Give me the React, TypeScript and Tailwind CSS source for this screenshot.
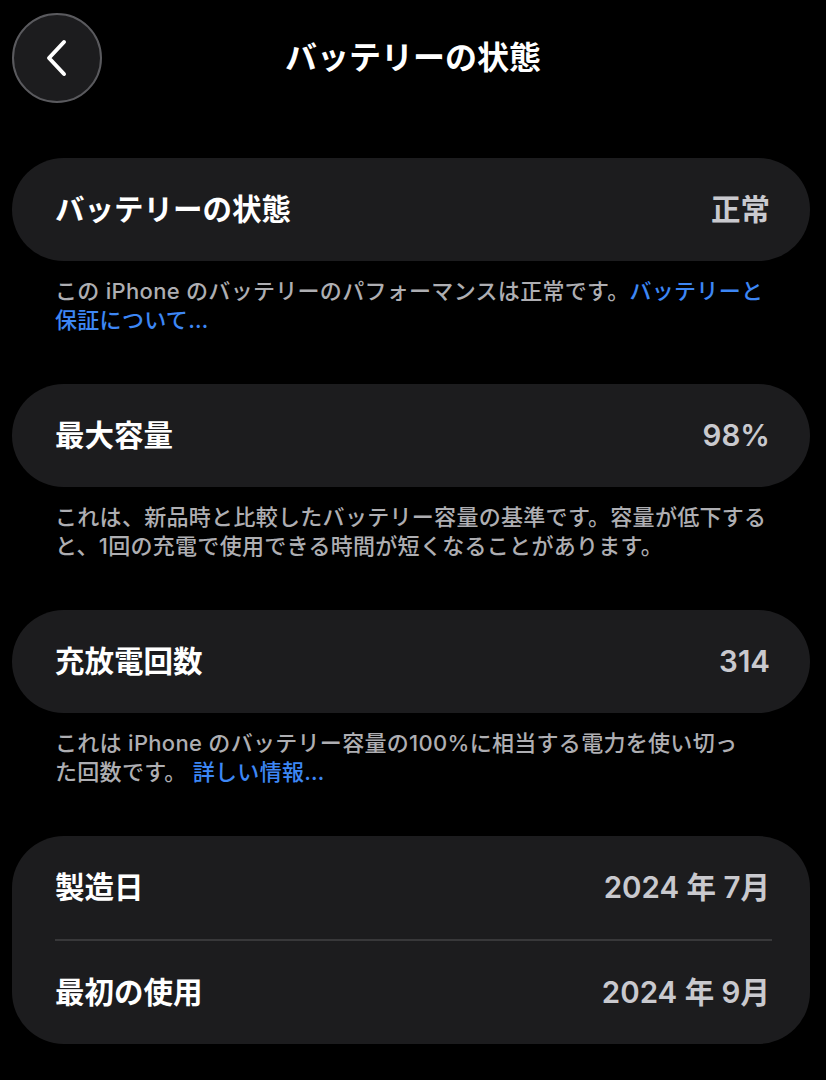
import React from "react";

const font = { fontFamily: 'Inter, "Noto Sans CJK JP", sans-serif' };

function Row({ label, value }: { label: string; value: string }) {
  return (
    <div className="flex h-[103px] items-center justify-between pl-[43px] pr-[40px]">
      <span className="text-[29.5px] font-bold text-white">{label}</span>
      <span className="text-[29.5px] font-semibold text-[#c9c9ce]">{value}</span>
    </div>
  );
}

function Card({ children }: { children: React.ReactNode }) {
  return <div className="w-[798px] rounded-[52px] bg-[#1c1c1e]">{children}</div>;
}

function Note({ children }: { children: React.ReactNode }) {
  return (
    <div className="mt-[16px] mb-[49px] whitespace-nowrap pl-[43px] text-[22px] font-medium leading-[29px] tracking-[0.3px] text-[#aeaeb2]">
      {children}
    </div>
  );
}

export default function App() {
  return (
    <div className="min-h-[1080px] w-[826px] bg-black" style={font}>
      <div className="relative flex h-[158px] items-start justify-center">
        <div className="absolute left-[12px] top-[13px] flex h-[90px] w-[90px] items-center justify-center rounded-full border-2 border-[#5a5a5e] bg-[#1c1c1e]">
          <svg width="24" height="38" viewBox="0 0 24 38" fill="none" className="-ml-[3px]">
            <path d="M20 3 L5 19 L20 35" stroke="white" strokeWidth="4" strokeLinecap="round" strokeLinejoin="round" />
          </svg>
        </div>
        <div className="mt-[37px] text-[32px] font-bold leading-[42px] text-white">バッテリーの状態</div>
      </div>
      <div className="pl-[12px]">
        <Card>
          <Row label="バッテリーの状態" value="正常" />
        </Card>
        <Note>
          この iPhone のバッテリーのパフォーマンスは正常です。<span className="text-[#3d87f5]">バッテリーと</span>
          <br />
          <span className="text-[#3d87f5]">保証について…</span>
        </Note>
        <Card>
          <Row label="最大容量" value="98%" />
        </Card>
        <Note>
          これは、新品時と比較したバッテリー容量の基準です。容量が低下する
          <br />
          と、1回の充電で使用できる時間が短くなることがあります。
        </Note>
        <Card>
          <Row label="充放電回数" value="314" />
        </Card>
        <Note>
          これは iPhone のバッテリー容量の100%に相当する電力を使い切っ
          <br />
          た回数です。 <span className="text-[#3d87f5]">詳しい情報…</span>
        </Note>
        <Card>
          <Row label="製造日" value="2024 年 7月" />
          <div className="ml-[43px] mr-[38px] h-[2px] bg-[#38383a]" />
          <Row label="最初の使用" value="2024 年 9月" />
        </Card>
      </div>
    </div>
  );
}
